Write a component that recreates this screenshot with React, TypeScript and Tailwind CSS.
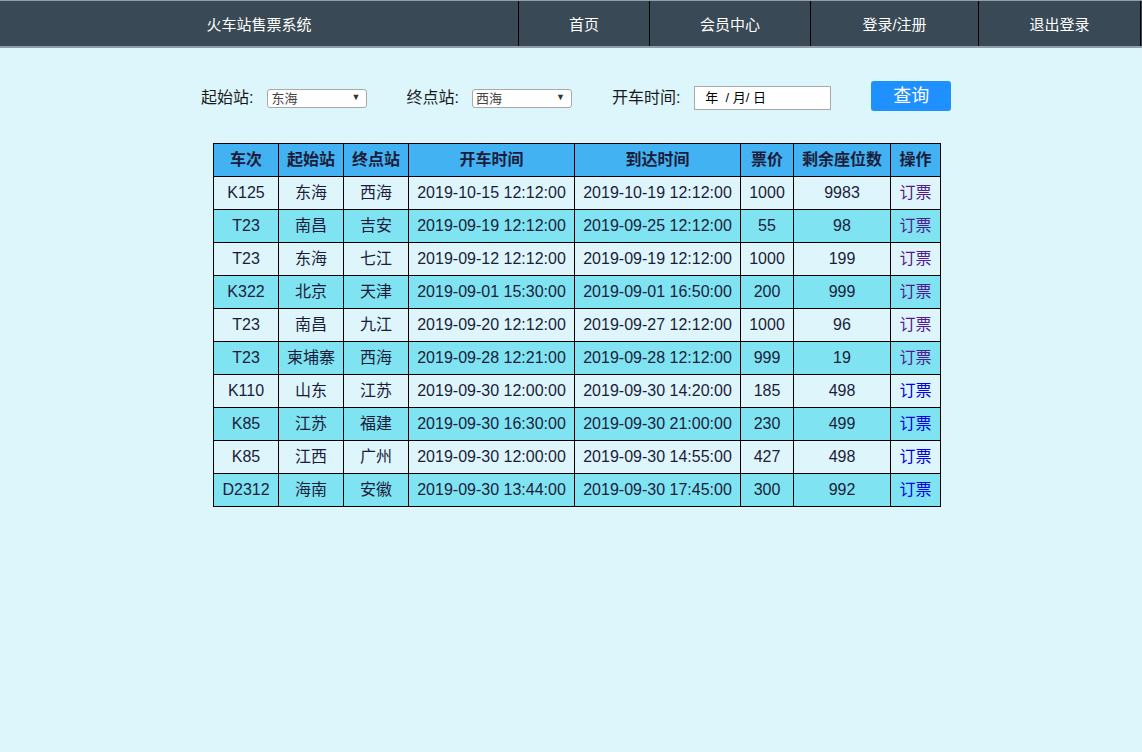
import React from "react";

type Row = {
  no: string;
  from: string;
  to: string;
  start: string;
  arrive: string;
  price: string;
  seats: string;
  visited: boolean;
};

const rows: Row[] = [
  { no: "K125", from: "东海", to: "西海", start: "2019-10-15 12:12:00", arrive: "2019-10-19 12:12:00", price: "1000", seats: "9983", visited: true },
  { no: "T23", from: "南昌", to: "吉安", start: "2019-09-19 12:12:00", arrive: "2019-09-25 12:12:00", price: "55", seats: "98", visited: true },
  { no: "T23", from: "东海", to: "七江", start: "2019-09-12 12:12:00", arrive: "2019-09-19 12:12:00", price: "1000", seats: "199", visited: true },
  { no: "K322", from: "北京", to: "天津", start: "2019-09-01 15:30:00", arrive: "2019-09-01 16:50:00", price: "200", seats: "999", visited: true },
  { no: "T23", from: "南昌", to: "九江", start: "2019-09-20 12:12:00", arrive: "2019-09-27 12:12:00", price: "1000", seats: "96", visited: true },
  { no: "T23", from: "柬埔寨", to: "西海", start: "2019-09-28 12:21:00", arrive: "2019-09-28 12:12:00", price: "999", seats: "19", visited: true },
  { no: "K110", from: "山东", to: "江苏", start: "2019-09-30 12:00:00", arrive: "2019-09-30 14:20:00", price: "185", seats: "498", visited: false },
  { no: "K85", from: "江苏", to: "福建", start: "2019-09-30 16:30:00", arrive: "2019-09-30 21:00:00", price: "230", seats: "499", visited: false },
  { no: "K85", from: "江西", to: "广州", start: "2019-09-30 12:00:00", arrive: "2019-09-30 14:55:00", price: "427", seats: "498", visited: false },
  { no: "D2312", from: "海南", to: "安徽", start: "2019-09-30 13:44:00", arrive: "2019-09-30 17:45:00", price: "300", seats: "992", visited: false },
];

const font = "font-['Liberation_Sans','Noto_Sans_CJK_SC',sans-serif]";

// 下拉框（静态外观）
const FakeSelect = ({ value }: { value: string }) => (
  <div className="mt-[4px] w-[100px] h-[19px] bg-white border border-[#a9a9a9] rounded-[3px] flex items-center justify-between pl-[3px] pr-[6px] text-[13px] text-[#444]">
    <span className="pt-[2px]">{value}</span>
    <span className="text-[9px] text-[#333]">▼</span>
  </div>
);

const navItems = [
  { label: "首页", w: "w-[131px]" },
  { label: "会员中心", w: "w-[161px]" },
  { label: "登录/注册", w: "w-[168px]" },
  { label: "退出登录", w: "w-[162px]" },
];

export default function App() {
  return (
    <div className={`min-h-[752px] bg-[#dcf6fb] ${font}`}>
      {/* 顶部导航 */}
      <nav className="h-[48px] flex bg-[#394955] border-t border-b-2 border-[#8f9fa8] text-white text-[15px]">
        <div className="w-[519px] flex items-center justify-center pt-[3px] border-r border-black">火车站售票系统</div>
        {navItems.map((item) => (
          <div key={item.label} className={`${item.w} flex items-center justify-center pt-[3px] border-r border-black`}>
            {item.label}
          </div>
        ))}
      </nav>

      {/* 查询条件 */}
      <div className="flex items-center h-[30px] mt-[33px] pl-[201px] text-[16px] text-[#1a1a1a]">
        <span className="mt-[4px] mr-[14px]">起始站:</span>
        <FakeSelect value="东海" />
        <span className="mt-[4px] ml-[39px] mr-[13px]">终点站:</span>
        <FakeSelect value="西海" />
        <span className="mt-[4px] ml-[40px] mr-[14px]">开车时间:</span>
        <div className="mt-[4px] w-[137px] h-[24px] bg-white border border-[#a9a9a9] flex items-center pl-[10px] text-[13px] text-black">
          年&nbsp;&nbsp;/&nbsp;月/&nbsp;日
        </div>
        <button className="ml-[40px] w-[80px] h-[30px] bg-[#1e90ff] text-white text-[18px] rounded-[3px]">查询</button>
      </div>

      {/* 车次表 */}
      <table className="ml-[213px] mt-[32px] border-collapse text-[16px] text-[#1c1c3a] text-center">
        <colgroup>
          <col className="w-[65px]" />
          <col className="w-[65px]" />
          <col className="w-[65px]" />
          <col className="w-[166px]" />
          <col className="w-[166px]" />
          <col className="w-[53px]" />
          <col className="w-[97px]" />
          <col className="w-[50px]" />
        </colgroup>
        <thead>
          <tr className="bg-[#42b2f3] font-bold h-[33px]">
            {["车次", "起始站", "终点站", "开车时间", "到达时间", "票价", "剩余座位数", "操作"].map((h) => (
              <th key={h} className="border border-black p-0">{h}</th>
            ))}
          </tr>
        </thead>
        <tbody>
          {rows.map((r, i) => (
            <tr key={i} className={`h-[33px] ${i % 2 === 0 ? "bg-[#def6fb]" : "bg-[#7fe3f2]"}`}>
              <td className="border border-black p-0">{r.no}</td>
              <td className="border border-black p-0">{r.from}</td>
              <td className="border border-black p-0">{r.to}</td>
              <td className="border border-black p-0">{r.start}</td>
              <td className="border border-black p-0">{r.arrive}</td>
              <td className="border border-black p-0">{r.price}</td>
              <td className="border border-black p-0">{r.seats}</td>
              <td className="border border-black p-0">
                <a href="#" className={r.visited ? "text-[#551a8b]" : "text-[#0000ee]"}>订票</a>
              </td>
            </tr>
          ))}
        </tbody>
      </table>
    </div>
  );
}
